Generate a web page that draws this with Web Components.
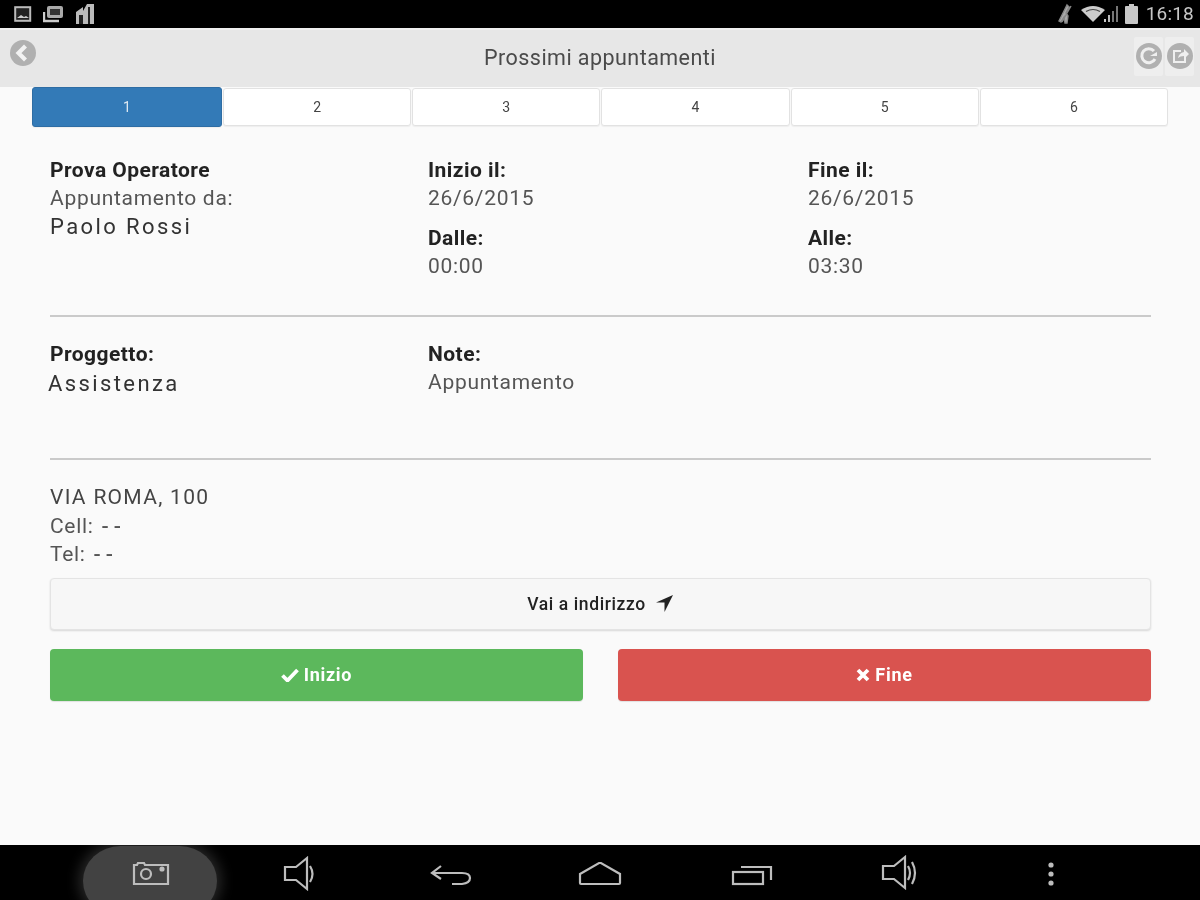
<!DOCTYPE html>
<html><head><meta charset="utf-8"><style>
html,body{margin:0;padding:0;background:#fafafa}
body{width:1200px;height:900px;overflow:hidden;font-family:Roboto,"Liberation Sans",sans-serif;display:flex;flex-direction:column}
</style></head><body>
<status-bar></status-bar>
<app-header></app-header>
<step-tabs></step-tabs>
<appointment-view></appointment-view>
<nav-bar></nav-bar>
<script>
function def(name,html){customElements.define(name,class extends HTMLElement{constructor(){super();this.attachShadow({mode:'open'}).innerHTML=html;}});}
def('status-bar',`<style>
:host{display:flex;flex:none;height:28px;background:#000;align-items:center;justify-content:space-between;padding:0 6px 0 14px;color:#c4c4c4;filter:blur(.6px)}
.l,.r{display:flex;align-items:center}
.l{gap:11px}.r{gap:0}
svg{display:block}
span{font:400 19px/28px Roboto,sans-serif;letter-spacing:.2px;margin-left:8px;color:#c8c8c8}
</style>
<div class="l">
<svg width="18" height="16" viewBox="0 0 18 16"><rect x="1.2" y="1.2" width="15" height="13.6" fill="#222" stroke="#bbb" stroke-width="2"/><path d="M3 12l4-3 3 2 2-1 3 2z" fill="#ccc"/></svg>
<svg width="21" height="18" viewBox="0 0 21 18"><rect x="4" y="1" width="16" height="12" rx="2" fill="#aaa"/><rect x="7" y="4" width="10" height="6" fill="#333"/><path d="M1 7v9h15" fill="none" stroke="#ccc" stroke-width="2.4"/></svg>
<svg width="20" height="22" viewBox="0 0 20 22"><path d="M1 9l7-5v4l4-7h7v20H1z" fill="#bbb"/><path d="M4 12h4v9H4zM13 4h2v17h-2z" fill="#222"/></svg>
</div>
<div class="r">
<svg width="20" height="22" viewBox="0 0 20 22" style="margin-right:6px"><path d="M12 2l2 2-3 6 2 3-1 7h-2l-1-6-3 5-2-1 4-8zM16 3l-9 16" fill="#aaa" stroke="#888" stroke-width="1.4"/></svg>
<svg width="24" height="18" viewBox="0 0 24 18"><path d="M0 5Q12-3 24 5L12 17z" fill="#ccc"/><path d="M5 6.5Q12 2.500 19 6.500" fill="none" stroke="#444" stroke-width="1.2"/></svg>
<svg width="15" height="18" viewBox="0 0 15 18" style="margin-left:-2px"><path d="M1 14h2v3H1z" fill="#ccc"/><path d="M5 10h2v7H5z" fill="#bbb"/><path d="M9 6h2v11H9zM13 1h2v16h-2z" fill="#777"/></svg>
<svg width="13" height="20" viewBox="0 0 13 20" style="margin-left:7px"><path d="M4 0h5v2h3a1 1 0 011 1v16a1 1 0 01-1 1H1a1 1 0 01-1-1V3a1 1 0 011-1h3z" fill="#c8c8c8"/></svg>
<span>16:18</span>
</div>`);
def('app-header',`<style>
:host{display:flex;flex:none;height:59px;box-sizing:border-box;border-top:2px solid #f0f0f0;background:#e7e7e7;position:relative;align-items:center;justify-content:space-between;padding:0 6px 0 10px}
h1{position:absolute;left:0;right:0;top:13px;margin:0;text-align:center;font:400 21.500px/30px Roboto,sans-serif;color:#4a4a4a;letter-spacing:.45px;filter:blur(.4px)}
.b{display:flex;gap:2px;margin-top:-5px}
.c{width:29px;height:39px;background:#eeeeee;display:flex;align-items:center;justify-content:center;border-radius:2px}
svg{display:block;filter:blur(.4px)}
.back{margin-top:-11px}
</style>
<svg class="back" width="26" height="26" viewBox="0 0 26 26"><circle cx="13" cy="13" r="13" fill="#b0b0b0"/><path d="M15.500 6l-7 7 7 7" fill="none" stroke="#f2f2f2" stroke-width="4.200"/></svg>
<h1>Prossimi appuntamenti</h1>
<div class="b">
<div class="c"><svg width="26" height="26" viewBox="0 0 26 26"><circle cx="13" cy="13" r="13" fill="#b0b0b0"/><path d="M19 16a7 7 0 11-1-8" fill="none" stroke="#efefef" stroke-width="3"/><path d="M14 13h7V9z" fill="#efefef"/></svg></div>
<div class="c"><svg width="26" height="26" viewBox="0 0 26 26"><circle cx="13" cy="13" r="13" fill="#b0b0b0"/><path d="M14 8H7v11h11v-5" fill="none" stroke="#efefef" stroke-width="2"/><path d="M11 15q1-5 6-6V6l5 5-5 5v-3q-4 0-6 2z" fill="#efefef"/></svg></div>
</div>`);
customElements.define('step-tab',class extends HTMLElement{constructor(){super();this.attachShadow({mode:'open'}).innerHTML=`<style>
:host{flex:1 1 0;display:flex;align-items:center;justify-content:center;box-sizing:border-box;height:38px;margin-top:1px;background:#fff;border:1px solid #e2e2e2;border-radius:3px;font:400 14px/20px Roboto,sans-serif;color:#444;box-shadow:0 1px 1px rgba(0,0,0,.05);filter:blur(.3px)}
:host([active]){background:#337ab7;border-color:#2e6da4;color:#dfe9f2;height:40px;margin-top:0}
</style><slot></slot>`;}});
def('step-tabs',`<style>
:host{display:flex;flex:none;height:40px;padding:0 32px}
.w{display:flex;width:100%;gap:1px}
step-tab:first-child{flex:0 0 190px}
</style><div class="w"><step-tab active>1</step-tab><step-tab>2</step-tab><step-tab>3</step-tab><step-tab>4</step-tab><step-tab>5</step-tab><step-tab>6</step-tab></div>`);
customElements.define('action-btn',class extends HTMLElement{constructor(){super();this.attachShadow({mode:'open'}).innerHTML=`<style>
:host{display:flex;align-items:center;justify-content:center;gap:5px;box-sizing:border-box;height:52px;border-radius:4px;font:700 18px/20px Roboto,sans-serif;color:#fff;flex:1 1 0;white-space:pre}
:host([kind=ok]){background:#5cb85c;box-shadow:0 1px 1px rgba(0,0,0,.1)}
:host([kind=no]){background:#d9534f;box-shadow:0 1px 1px rgba(0,0,0,.1)}
:host([kind=plain]){flex:none;background:#f7f7f7;border:1px solid #e4e4e4;box-shadow:0 1px 2px rgba(0,0,0,.14);color:#222;font-weight:500;gap:9px;font-size:17.500px;letter-spacing:.6px}
</style><slot></slot>`;}});
def('appointment-view',`<style>
:host{display:block;flex:1 1 0;box-sizing:border-box;padding:29px 49px 0 50px;color:#555;font:400 21px/28px Roboto,sans-serif;letter-spacing:.7px;filter:blur(.45px)}
.row{display:grid;grid-template-columns:378px 380px 1fr}
b{display:block;font-weight:700;color:#222;font-size:21px;letter-spacing:.45px}
.big{letter-spacing:2.400px;color:#333;font-size:22px;display:block;margin-top:1px}
.s{display:block}
.gap{margin-top:12px}
hr{border:0;height:2px;margin:0;background:#cacaca}
.r1{height:159px}
.r2{padding-top:23px;height:118px}
.r2 .big{margin:2px 0 0 -2px}
.addr{padding-top:23px}
.addr>.s{line-height:28.500px}
.ml{letter-spacing:1.300px;color:#444}
.dd{letter-spacing:5px;margin-left:2px;font-weight:500}
.btns{display:flex;flex-direction:column;gap:19px;margin-top:9px}
.two{display:flex;gap:35px}
svg{display:block}
</style>
<div class="row r1">
<div><b>Prova Operatore</b><span class="s">Appuntamento da:</span><span class="big">Paolo Rossi</span></div>
<div><b>Inizio il:</b><span class="s">26/6/2015</span><b class="gap">Dalle:</b><span class="s">00:00</span></div>
<div><b>Fine il:</b><span class="s">26/6/2015</span><b class="gap">Alle:</b><span class="s">03:30</span></div>
</div>
<hr>
<div class="row r2">
<div><b>Proggetto:</b><span class="big">Assistenza</span></div>
<div><b>Note:</b><span class="s">Appuntamento</span></div>
</div>
<hr>
<div class="addr">
<span class="s ml">VIA ROMA, 100</span>
<span class="s">Cell: <span class="dd">--</span></span>
<span class="s">Tel: <span class="dd">--</span></span>
</div>
<div class="btns">
<action-btn kind="plain">Vai a indirizzo<svg width="19" height="19" viewBox="0 0 19 19"><path d="M18 1L1 8.500h8.500V18z" fill="#222"/></svg></action-btn>
<div class="two">
<action-btn kind="ok"><svg width="18" height="14" viewBox="0 0 18 14"><path d="M1.500 7.500l5 5L16.500 2" fill="none" stroke="#fff" stroke-width="3.800"/></svg>Inizio</action-btn>
<action-btn kind="no"><svg width="14" height="14" viewBox="0 0 14 14"><path d="M2 2l10 10M12 2L2 12" fill="none" stroke="#fff" stroke-width="3.800"/></svg>Fine</action-btn>
</div>
</div>`);
def('nav-bar',`<style>
:host{display:block;flex:none;height:55px;background:#000;position:relative;overflow:hidden}
.i{position:absolute;top:0;filter:blur(.6px)}
.glow{position:absolute;left:83px;top:1px;width:134px;height:70px;background:#424242;border-radius:28%/50%;box-shadow:0 0 14px 4px #2a2a2a}
svg{display:block;fill:none;stroke:#bdbdbd;stroke-width:2.200}
</style>
<div class="glow"></div>
<svg class="i" style="left:132px" width="38" height="55" viewBox="0 0 38 55"><path d="M2 20h3l1-2h6l1 2h23v19H2z"/><circle cx="14" cy="29" r="5"/><circle cx="30" cy="24" r="1.500" fill="#bdbdbd"/></svg>
<svg class="i" style="left:283px" width="36" height="55" viewBox="0 0 36 55"><path d="M2 22h11l11-9v31l-11-9H2z"/><path d="M27 21q5 8 0 16" /></svg>
<svg class="i" style="left:430px" width="42" height="55" viewBox="0 0 42 55"><path d="M11 21l-9 7 9 6M2 28h30q8 0 8 5t-8 6H22"/></svg>
<svg class="i" style="left:578px" width="44" height="55" viewBox="0 0 44 55"><path d="M2 29L21 18h2l19 11v9q0 1-1 1H3q-1 0-1-1z"/></svg>
<svg class="i" style="left:731px" width="42" height="55" viewBox="0 0 42 55"><rect x="2" y="27" width="30" height="12"/><path d="M10 22h30v13"/></svg>
<svg class="i" style="left:881px" width="40" height="55" viewBox="0 0 40 55"><path d="M2 21h11l11-9v31l-11-9H2z"/><path d="M27 21q4 7 0 14M31 17q6 11 0 22"/></svg>
<svg class="i" style="left:1045px" width="12" height="55" viewBox="0 0 12 55"><circle cx="6" cy="20" r="2.600" fill="#bdbdbd" stroke="none"/><circle cx="6" cy="29" r="2.600" fill="#bdbdbd" stroke="none"/><circle cx="6" cy="38" r="2.600" fill="#bdbdbd" stroke="none"/></svg>`);
</script>
</body></html>
